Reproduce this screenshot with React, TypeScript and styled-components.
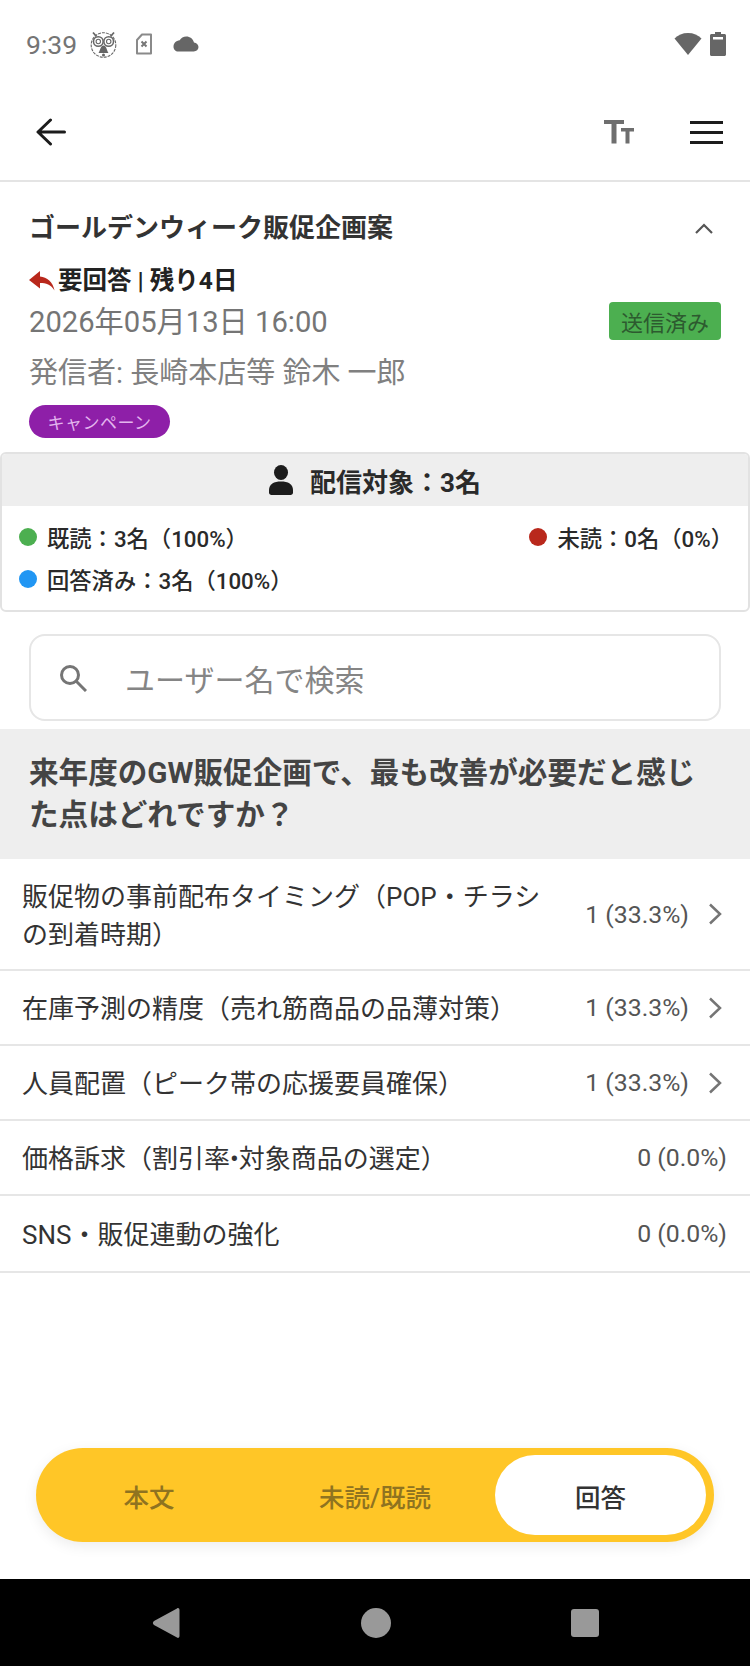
import React from 'react';
import styled, { createGlobalStyle } from 'styled-components';

const GlobalStyle = createGlobalStyle`
  html, body {
    margin: 0;
    padding: 0;
    background: #fff;
    font-family: Roboto, "Noto Sans CJK JP", sans-serif;
  }
  * { box-sizing: border-box; }
`;

const answers = [
  { label: '販促物の事前配布タイミング（POP・チラシの到着時期）', value: '1 (33.3%)', more: true, tall: true },
  { label: '在庫予測の精度（売れ筋商品の品薄対策）', value: '1 (33.3%)', more: true },
  { label: '人員配置（ピーク帯の応援要員確保）', value: '1 (33.3%)', more: true },
  { label: '価格訴求（割引率•対象商品の選定）', value: '0 (0.0%)', more: false },
  { label: 'SNS・販促連動の強化', value: '0 (0.0%)', more: false },
];

const Owl = () => (
  <svg width="27" height="27" viewBox="0 0 27 27" fill="none" stroke="#666" strokeWidth="1.100">
    <circle cx="13.500" cy="14" r="12.300" strokeDasharray="3 1" />
    <path d="M3 1.500l3.500 4M24 1.500l-3.500 4" strokeWidth="1.800" />
    <circle cx="8.300" cy="10.500" r="4.800" strokeWidth="1.500" />
    <circle cx="18.700" cy="10.500" r="4.800" strokeWidth="1.500" />
    <circle cx="8.300" cy="10.500" r="2.200" />
    <circle cx="18.700" cy="10.500" r="2.200" />
    <path d="M13.500 14.500c-3 0-3.200 5-5 7.500h10c-1.800-2.500-2-7.500-5-7.500z" fill="#666" stroke="none" />
    <circle cx="13.500" cy="24" r="1.500" fill="#666" stroke="none" />
  </svg>
);

const App: React.FC = () => {
  return (
    <Screen>
      <GlobalStyle />
      <StatusBar>
        <StatusLeft>
          <Clock>9:39</Clock>
          <Owl />
          <SimIcon width="18" height="22" viewBox="0 0 18 22" fill="none">
            <path d="M7 1.500h9v19H2V7z" stroke="#8a8a8a" strokeWidth="2" strokeLinejoin="round" />
            <path d="M6.500 8.500l5 5m0-5l-5 5" stroke="#777" strokeWidth="2" />
          </SimIcon>
          <svg width="26" height="16" viewBox="0 0 26 16">
            <path d="M21 6.500C20 2.800 17 .5 13.300.5 10.400.5 8 2 6.700 4.300 3 4.700.5 7.300.5 10.700c0 2.600 2 4.800 4.800 4.800h15.500c2.600 0 4.700-1.800 4.700-4.400 0-2.400-2-4.400-4.500-4.600z" fill="#666" />
          </svg>
        </StatusLeft>
        <StatusRight>
          <svg width="28" height="24" viewBox="0 0 28 24">
            <path d="M14 23L.5 6.500C4 3 8.500 1 14 1s10 2 13.500 5.500z" fill="#666" />
          </svg>
          <svg width="16" height="24" viewBox="0 0 16 24">
            <path d="M5 0h6v2h3.500c.8 0 1.500.7 1.500 1.500V22.500c0 .8-.7 1.500-1.500 1.500h-13C.7 24 0 23.300 0 22.500V3.500C0 2.700.7 2 1.500 2H5z" fill="#666" />
            <rect x="3" y="5" width="10" height="2.500" fill="#fff" />
          </svg>
        </StatusRight>
      </StatusBar>

      <Toolbar>
        <svg width="30" height="28" viewBox="0 0 30 28" fill="none" stroke="#1c1c1c" strokeWidth="3" strokeLinecap="round" strokeLinejoin="round">
          <path d="M28.500 14H2.500M14.500 2L2 14l12.500 12" />
        </svg>
        <ToolbarActions>
          <svg width="30" height="24" viewBox="0 0 30 24" fill="#6e6e6e">
            <path d="M0 0h20v4h-7.500v19.500h-5V4H0z" />
            <path d="M17 8h13v3.500h-4.500v12h-4v-12H17z" />
          </svg>
          <svg width="33" height="23" viewBox="0 0 33 23" fill="#1c1c1c">
            <rect width="33" height="3" y="0" />
            <rect width="33" height="3" y="10" />
            <rect width="33" height="3" y="20" />
          </svg>
        </ToolbarActions>
      </Toolbar>

      <Summary>
        <TitleRow>
          <Title>ゴールデンウィーク販促企画案</Title>
          <svg width="18" height="11" viewBox="0 0 18 11" fill="none" stroke="#555" strokeWidth="2.200">
            <path d="M1 10l8-8 8 8" />
          </svg>
        </TitleRow>
        <ReplyRow>
          <svg width="26" height="20" viewBox="0 0 26 20">
            <path d="M11 0L0 9l11 8.500V12c6 0 11 1.500 14.500 7.500C24 11 18 6 11 5.500z" fill="#b9281c" />
          </svg>
          要回答 | 残り4日
        </ReplyRow>
        <DateRow>
          <MetaText>2026年05月13日 16:00</MetaText>
          <SentBadge>送信済み</SentBadge>
        </DateRow>
        <Sender>発信者: 長崎本店等 鈴木 一郎</Sender>
        <CategoryBadge>キャンペーン</CategoryBadge>
      </Summary>

      <TargetCard>
        <TargetHeader>
          <svg width="24" height="30" viewBox="0 0 24 30" fill="#1c1c1c">
            <ellipse cx="12" cy="7.500" rx="7" ry="7.500" />
            <path d="M0 25c0-6 5-8.500 12-8.500S24 19 24 25v2.500c0 1.400-1 2.500-2.500 2.500h-19C1 30 0 28.900 0 27.500z" />
          </svg>
          配信対象：3名
        </TargetHeader>
        <TargetBody>
          <StatRow>
            <Stat><Dot $color="#4caf50" />既読：3名（100%）</Stat>
            <Stat><Dot $color="#b9281c" />未読：0名（0%）</Stat>
          </StatRow>
          <StatRow>
            <Stat><Dot $color="#2196f3" />回答済み：3名（100%）</Stat>
          </StatRow>
        </TargetBody>
      </TargetCard>

      <SearchBox>
        <svg width="28" height="28" viewBox="0 0 28 28" fill="none" stroke="#757575" strokeWidth="3">
          <circle cx="11" cy="11" r="8.500" />
          <path d="M17 17l10 10" />
        </svg>
        <SearchText>ユーザー名で検索</SearchText>
      </SearchBox>

      <Question>来年度のGW販促企画で、最も改善が必要だと感じた点はどれですか？</Question>

      <AnswerList>
        {answers.map((a) => (
          <AnswerRow key={a.label} $tall={a.tall}>
            <AnswerLabel>{a.label}</AnswerLabel>
            <AnswerValue>{a.value}</AnswerValue>
            {a.more && (
              <Chevron width="15" height="22" viewBox="0 0 15 22" fill="none" stroke="#757575" strokeWidth="2.500">
                <path d="M2 1.500L12 11 2 20.500" />
              </Chevron>
            )}
          </AnswerRow>
        ))}
      </AnswerList>

      <TabsWrap>
        <Tabs>
          <Tab>本文</Tab>
          <Tab>未読/既読</Tab>
          <Tab $active>回答</Tab>
        </Tabs>
      </TabsWrap>

      <NavBar>
        <svg width="28" height="32" viewBox="0 0 28 32">
          <path d="M25 1.500c1.200-1 2.500 0 2.500 1.500v26c0 1.500-1.300 2.500-2.500 1.500L2 18c-1.500-1-1.500-3 0-4z" fill="#999" />
        </svg>
        <svg width="30" height="30" viewBox="0 0 30 30">
          <circle cx="15" cy="15" r="15" fill="#999" />
        </svg>
        <svg width="28" height="28" viewBox="0 0 28 28">
          <rect width="28" height="28" rx="3" fill="#999" />
        </svg>
      </NavBar>
    </Screen>
  );
};

export default App;

// Styled-components
const Screen = styled.div`
  width: 750px;
  height: 1666px;
  display: flex;
  flex-direction: column;
  background: #fff;
  overflow: hidden;
`;

const StatusBar = styled.div`
  height: 88px;
  padding: 0 24px 0 26px;
  display: flex;
  align-items: center;
  justify-content: space-between;
`;

const StatusLeft = styled.div`
  display: flex;
  align-items: center;
  gap: 13px;
`;

const Clock = styled.span`
  font-size: 26.500px;
  color: #757575;
`;

const SimIcon = styled.svg`
  margin: 0 7px 0 5px;
`;

const StatusRight = styled.div`
  display: flex;
  align-items: center;
  gap: 8px;
`;

const Toolbar = styled.div`
  height: 94px;
  padding: 0 27px 4px 36px;
  display: flex;
  align-items: center;
  justify-content: space-between;
  border-bottom: 2px solid #e4e4e4;
`;

const ToolbarActions = styled.div`
  display: flex;
  align-items: center;
  gap: 56px;
`;

const Summary = styled.div`
  padding: 27px 29px 14px;
  display: flex;
  flex-direction: column;
  align-items: flex-start;
`;

const TitleRow = styled.div`
  width: 100%;
  padding-right: 8px;
  display: flex;
  align-items: center;
  justify-content: space-between;
`;

const Title = styled.div`
  font-size: 26px;
  line-height: 38px;
  font-weight: 700;
  color: #333;
`;

const ReplyRow = styled.div`
  margin-top: 19px;
  display: flex;
  align-items: center;
  gap: 3px;
  font-size: 24.500px;
  line-height: 30px;
  font-weight: 700;
  color: #222;
`;

const DateRow = styled.div`
  width: 100%;
  margin-top: 6px;
  display: flex;
  align-items: center;
  justify-content: space-between;
`;

const MetaText = styled.span`
  font-size: 29.200px;
  line-height: 40px;
  color: #757575;
`;

const SentBadge = styled.span`
  width: 112px;
  height: 38px;
  margin-top: -3px;
  display: flex;
  align-items: center;
  justify-content: center;
  border-radius: 4px;
  background: #4caf50;
  color: #2d5a2f;
  font-size: 22px;
`;

const Sender = styled.div`
  margin-top: 10px;
  font-size: 29px;
  line-height: 42px;
  color: #808080;
`;

const CategoryBadge = styled.span`
  margin-top: 11px;
  width: 141px;
  height: 33px;
  display: flex;
  align-items: center;
  justify-content: center;
  border-radius: 17px;
  background: #8e1fa8;
  color: #e3b5ee;
  font-size: 17px;
  letter-spacing: 0.5px;
`;

const TargetCard = styled.div`
  height: 160px;
  border: 2px solid #e2e2e2;
  border-radius: 6px;
  overflow: hidden;
`;

const TargetHeader = styled.div`
  height: 52px;
  display: flex;
  align-items: center;
  justify-content: center;
  gap: 17px;
  background: #eee;
  font-size: 26px;
  font-weight: 700;
  color: #2a2a2a;
`;

const TargetBody = styled.div`
  padding: 10px 15px 0 17px;
  display: flex;
  flex-direction: column;
  gap: 1px;
`;

const StatRow = styled.div`
  height: 41px;
  display: flex;
  align-items: center;
  justify-content: space-between;
`;

const Stat = styled.span`
  display: flex;
  align-items: center;
  gap: 10px;
  font-size: 22.300px;
  font-weight: 500;
  color: #2a2a2a;
`;

const Dot = styled.i<{ $color: string }>`
  width: 18px;
  height: 18px;
  border-radius: 50%;
  background: ${({ $color }) => $color};
`;

const SearchBox = styled.div`
  margin: 22px 29px 8px;
  height: 87px;
  padding: 0 28px;
  display: flex;
  align-items: center;
  gap: 38px;
  border: 2px solid #e6e6e6;
  border-radius: 16px;
`;

const SearchText = styled.span`
  font-size: 30px;
  color: #858585;
`;

const Question = styled.div`
  height: 130px;
  padding: 23px 29px;
  background: #eee;
  font-size: 29.600px;
  line-height: 42px;
  font-weight: 700;
  color: #444;
`;

const AnswerList = styled.div`
  flex: 1;
`;

const AnswerRow = styled.div<{ $tall?: boolean }>`
  height: ${({ $tall }) => ($tall ? '112px' : '75px')};
  padding: 0 23px 0 22px;
  display: flex;
  align-items: center;
  border-bottom: 2px solid #e6e6e6;

  &:last-child {
    height: 77px;
  }
`;

const AnswerLabel = styled.div`
  flex: 1;
  max-width: 530px;
  padding-top: 3px;
  font-size: 26px;
  line-height: 38px;
  color: #333;
`;

const AnswerValue = styled.div`
  margin-left: auto;
  font-size: 24.800px;
  color: #555;
`;

const Chevron = styled.svg`
  margin: 0 4px 0 19px;
`;

const TabsWrap = styled.div`
  padding: 0 36px 37px;
`;

const Tabs = styled.div`
  height: 94px;
  padding: 7px 8px 7px 0;
  display: grid;
  grid-template-columns: 226px 226px 1fr;
  border-radius: 47px;
  background: #ffc627;
  box-shadow: 0 4px 14px rgba(0, 0, 0, 0.08);
`;

const Tab = styled.div<{ $active?: boolean }>`
  margin-left: ${({ $active }) => ($active ? '7px' : '0')};
  display: flex;
  align-items: center;
  justify-content: center;
  border-radius: 40px;
  font-size: 25.500px;
  font-weight: 500;
  color: ${({ $active }) => ($active ? '#333' : '#8f7320')};
  background: ${({ $active }) => ($active ? '#fff' : 'transparent')};
`;

const NavBar = styled.div`
  height: 87px;
  padding: 0 151px 0 152px;
  display: flex;
  align-items: center;
  justify-content: space-between;
  background: #000;
`;
